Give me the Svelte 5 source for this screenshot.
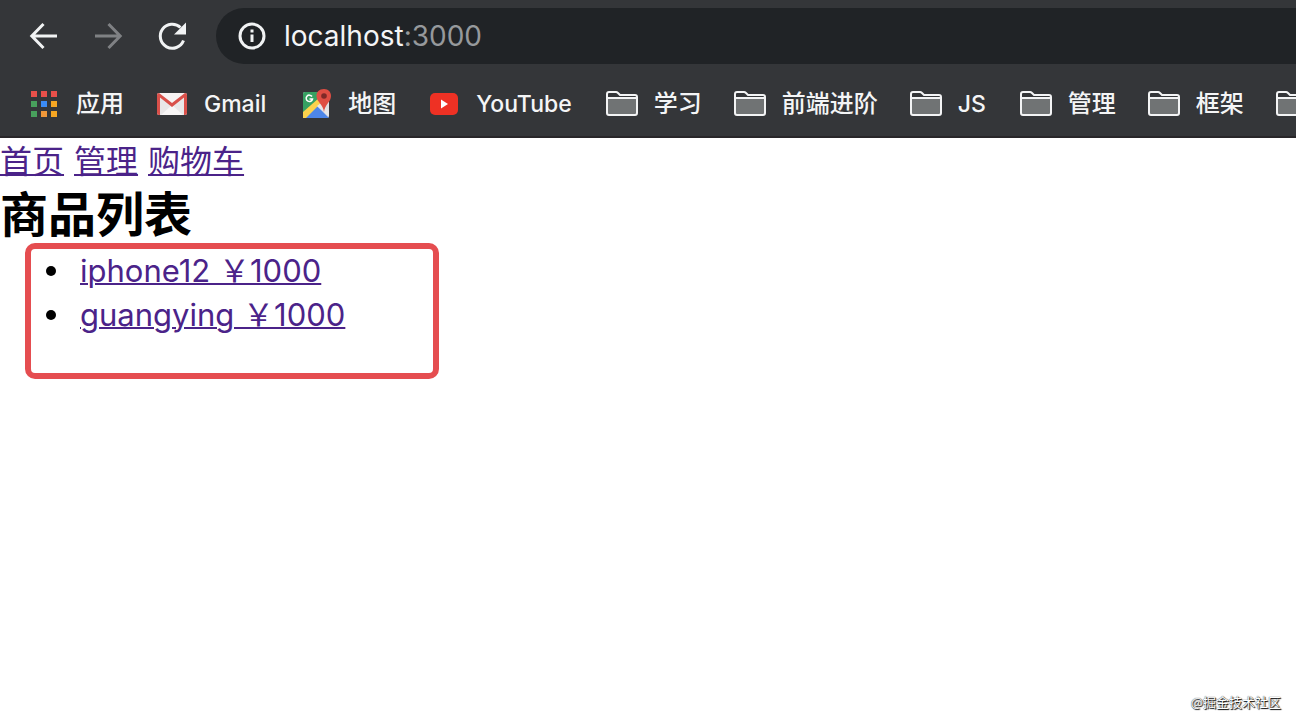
<script lang="ts">
  type Bookmark = { label: string; icon: string };

  const bookmarks: Bookmark[] = [
    { label: '应用', icon: 'apps' },
    { label: 'Gmail', icon: 'gmail' },
    { label: '地图', icon: 'maps' },
    { label: 'YouTube', icon: 'youtube' },
    { label: '学习', icon: 'folder' },
    { label: '前端进阶', icon: 'folder' },
    { label: 'JS', icon: 'folder' },
    { label: '管理', icon: 'folder' },
    { label: '框架', icon: 'folder' },
    { label: '', icon: 'folder' }
  ];

  const appColors = [
    '#e8504a', '#e8504a', '#e8504a',
    '#48a05c', '#3b8bf5', '#f5a623',
    '#48a05c', '#f0983a', '#f5a623'
  ];

  const links = ['首页', '管理', '购物车'];

  const products = [
    { name: 'iphone12', price: 1000 },
    { name: 'guangying', price: 1000 }
  ];

  const isLatin = (label: string) => /^[A-Za-z]+$/.test(label);
</script>

<header class="browser">
  <div class="toolbar">
    <div class="controls">
      <button class="nav-button" aria-label="后退">
        <svg viewBox="0 0 32 32"><path d="M29 16H4M15.500 4L3.800 16L15.500 28" /></svg>
      </button>
      <button class="nav-button" aria-label="前进" disabled>
        <svg viewBox="0 0 32 32"><path d="M3 16H28M16.500 4L28.200 16L16.500 28" /></svg>
      </button>
      <button class="nav-button" aria-label="刷新">
        <svg viewBox="0 0 32 32">
          <path d="M27.500 20.500A12 12 0 1 1 24.500 7.500" />
          <path class="solid" d="M30 2.500V14.500H18Z" />
        </svg>
      </button>
    </div>
    <div class="omnibox">
      <svg class="info" viewBox="0 0 28 28">
        <circle cx="14" cy="14" r="12" />
        <path d="M14 12.500V20M14 7.500V10.500" />
      </svg>
      <span class="url">localhost<span class="port">:3000</span></span>
    </div>
  </div>

  <nav class="bookmarks">
    {#each bookmarks as { label, icon }}
      <button class="bookmark" aria-label={label || '书签'}>
        <svg class="bookmark-icon" viewBox="0 0 32 32">
          {#if icon === 'apps'}
            {#each appColors as color, i}
              <rect x={3 + (i % 3) * 10} y={3 + Math.floor(i / 3) * 10} width="6" height="6" fill={color} />
            {/each}
          {:else if icon === 'gmail'}
            <rect x="1" y="5" width="30" height="22" rx="2" fill="#e9e7e8" />
            <path d="M5 27L16 17L27 27Z" fill="#f8f6f6" />
            <path d="M3 5H29L16 15Z" fill="#f7f3f3" />
            <path d="M1 7Q1 5 3 5L16 15L29 5Q31 5 31 7V25Q31 27 29 27H28V9.500L16 19L4 9.500V27H3Q1 27 1 25Z" fill="#d9504a" />
          {:else if icon === 'maps'}
            <rect x="3" y="4" width="26" height="26" rx="2" fill="#dedfe3" />
            <path d="M5 4H24L17 17L3 29V6Q3 4 5 4Z" fill="#36a162" />
            <path d="M5 30L17 18L29 30Z" fill="#4d86e8" />
            <path d="M3 24L19 10L22 14L6 30H3Z" fill="#fbd24d" />
            <path d="M17 18L21 15L29 23V28Z" fill="#e7e6e7" />
            <path d="M12 8.500A3.200 3.200 0 1 0 12.500 11H9.500" fill="none" stroke="#fff" stroke-width="1.500" />
            <path d="M24 1C19 1 16.500 4 16.500 8C16.500 14 23 16 24 24C25 16 31 14 31 8C31 4 28.500 1 24 1Z" fill="#df4e43" />
            <circle cx="24" cy="8" r="2.800" fill="#7f2927" />
          {:else if icon === 'youtube'}
            <rect x="2" y="5" width="28" height="22" rx="5" fill="#ee3124" />
            <path d="M13 11.500L20 16L13 20.500Z" fill="#fff" />
          {:else}
            <path d="M1 10H31V25Q31 27 29 27H3Q1 27 1 25Z" fill="#707374" />
            <path
              d="M1 10H31M3 4H10Q11 4 12 5L14 7H29Q31 7 31 9V25Q31 27 29 27H3Q1 27 1 25V6Q1 4 3 4Z"
              fill="none"
              stroke="#f3f4f5"
              stroke-width="2"
            />
          {/if}
        </svg>
        {#if label}
          <span class:latin={isLatin(label)}>{label}</span>
        {/if}
      </button>
    {/each}
  </nav>
</header>

<main class="page">
  <nav class="links">
    {#each links as link}
      <a href="#top">{link}</a>
    {/each}
  </nav>
  <h1>商品列表</h1>
  <div class="list-wrap">
    <ul>
      {#each products as product}
        <li><a href="#top">{product.name} ￥{product.price}</a></li>
      {/each}
    </ul>
    <div class="highlight"></div>
  </div>
</main>

<footer class="watermark">@掘金技术社区</footer>

<style>
  :global(body) {
    margin: 0;
    background: #fff;
    overflow: hidden;
  }

  :global(#app) {
    display: flex;
    flex-direction: column;
    min-height: 100vh;
  }

  .browser {
    background: #343639;
    border-bottom: 2px solid #282629;
    font-family: Inter, "Noto Sans CJK SC", sans-serif;
    color: #f4f5f6;
    overflow: hidden;
  }

  .toolbar {
    display: flex;
    gap: 28px;
    padding: 8px 0 8px 28px;
  }

  .controls {
    display: flex;
    align-items: center;
    gap: 32px;
  }

  button {
    border: 0;
    padding: 0;
    background: none;
    color: inherit;
    font: inherit;
  }

  .nav-button {
    display: flex;
    width: 32px;
    height: 32px;
  }

  .nav-button svg,
  .info {
    fill: none;
    stroke: #f1f3f4;
    stroke-width: 3;
  }

  .nav-button:disabled svg {
    stroke: #7f8184;
  }

  .nav-button .solid {
    fill: #f1f3f4;
    stroke: none;
  }

  .omnibox {
    display: flex;
    flex: 1;
    align-items: center;
    gap: 18px;
    height: 56px;
    padding-left: 22px;
    border-radius: 28px 0 0 28px;
    background: #202326;
    font-size: 28px;
  }

  .info {
    width: 28px;
    height: 28px;
  }

  .port {
    color: #96999c;
  }

  .bookmarks {
    display: flex;
    gap: 32px;
    height: 64px;
    padding-left: 28px;
  }

  .bookmark {
    display: flex;
    flex: none;
    align-items: center;
    gap: 16px;
    font-size: 24px;
    line-height: 24px;
    font-weight: 500;
    white-space: nowrap;
  }

  .latin {
    padding-right: 2px;
    font-size: 23px;
  }

  .bookmark-icon {
    width: 32px;
    height: 32px;
  }

  .page {
    flex: 1;
    font-family: Inter, "Noto Sans CJK SC", sans-serif;
    font-size: 32px;
    line-height: 44px;
    color: #000;
  }

  .links {
    display: flex;
    gap: 10px;
    line-height: 48px;
  }

  a {
    color: #4b2389;
    text-decoration-thickness: 2px;
  }

  h1 {
    margin: 0;
    font-size: 48px;
    line-height: 58px;
    font-weight: 700;
  }

  .list-wrap {
    position: relative;
    padding-top: 5px;
  }

  ul {
    margin: 0;
    padding-left: 46px;
    font-size: 31px;
    list-style: none;
  }

  li {
    display: flex;
    align-items: center;
    gap: 24px;
  }

  li::before {
    content: "";
    width: 10px;
    height: 10px;
    border-radius: 50%;
    background: #000;
  }

  .highlight {
    position: absolute;
    top: -1px;
    left: 25px;
    box-sizing: border-box;
    width: 414px;
    height: 136px;
    border: 6px solid #e54d50;
    border-radius: 10px;
  }

  .watermark {
    padding: 0 15px 10px;
    font: 13px/20px "Noto Sans CJK SC", sans-serif;
    text-align: right;
    color: #fff;
    text-shadow: 1px 1px 1px #000, 0 0 1px #000;
  }
</style>
